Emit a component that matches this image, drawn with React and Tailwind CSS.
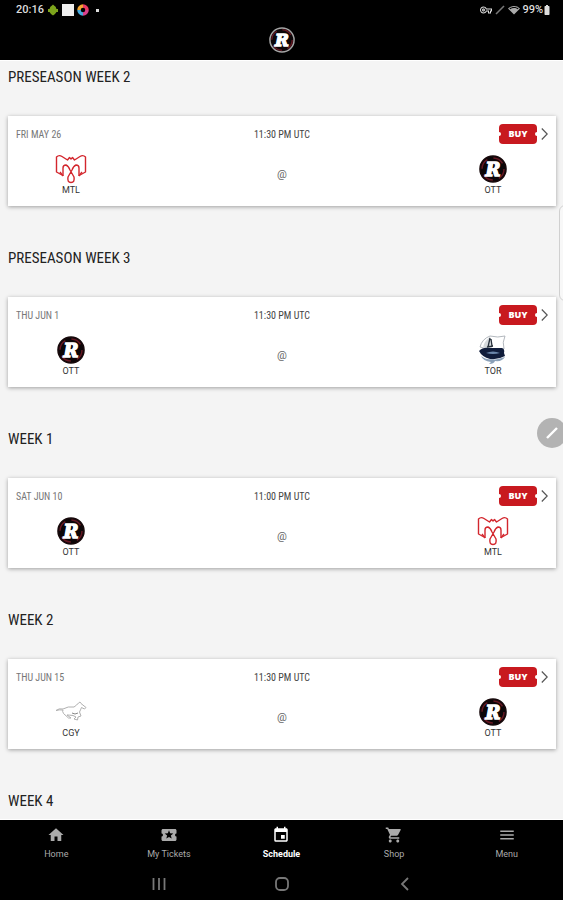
import React, { useState } from 'react';
import { MdHome, MdLocalPlay, MdEvent, MdShoppingCart, MdMenu, MdNetworkWifi, MdBatteryFull, MdOutlineVpnKey } from 'react-icons/md';

const weeks = [
  { title: 'PRESEASON WEEK 2', games: [{ date: 'FRI MAY 26', time: '11:30 PM UTC', away: 'MTL', home: 'OTT' }] },
  { title: 'PRESEASON WEEK 3', games: [{ date: 'THU JUN 1', time: '11:30 PM UTC', away: 'OTT', home: 'TOR' }] },
  { title: 'WEEK 1', games: [{ date: 'SAT JUN 10', time: '11:00 PM UTC', away: 'OTT', home: 'MTL' }] },
  { title: 'WEEK 2', games: [{ date: 'THU JUN 15', time: '11:30 PM UTC', away: 'CGY', home: 'OTT' }] },
  { title: 'WEEK 4', games: [] }
];

const tabs = [
  { label: 'Home', icon: MdHome },
  { label: 'My Tickets', icon: MdLocalPlay },
  { label: 'Schedule', icon: MdEvent },
  { label: 'Shop', icon: MdShoppingCart },
  { label: 'Menu', icon: MdMenu }
];

function OttLogo({ className, ring = '#17090b' }) {
  return <svg viewBox="0 0 28 28" className={className} aria-hidden="true">
    <circle cx="14" cy="14" r="13" fill="#0c0608" stroke={ring} strokeWidth="1.6" />
    <circle cx="14" cy="14" r="11" fill="none" stroke="#651722" strokeWidth="1.5" strokeDasharray="11 6.3" />
    <text x="14" y="20.5" textAnchor="middle" fontSize="18" fontWeight="700" fontStyle="italic" fill="#fff" stroke="#fff" strokeWidth="1.4" className="font-['DejaVu_Serif',serif]">R</text>
  </svg>;
}

function MtlLogo({ className }) {
  return <svg viewBox="0 0 32 30" className={className} fill="none" stroke="#d3262d" strokeWidth="1.4" strokeLinejoin="round" aria-hidden="true">
    <path d="M7 21 L1.5 18 V3 Q4 0.5 7 2.5 L12.5 6 L14.5 3.5 L16 5 L17.5 3.5 L19.5 6 L25 2.5 Q28 0.5 30.5 3 V18 L25 21" />
    <path d="M8 22 V14 Q8 11 11 11 Q13.5 12 15 16 L19 23 Q20 28.5 16 28.5 Q12 28.5 13 23 L17 16 Q18.5 12 21 11 Q24 11 24 14 V22" />
    <path d="M5 18 L8 22 M27 18 L24 22" />
  </svg>;
}

function TorLogo({ className }) {
  return <svg viewBox="0 0 30 30" className={className} aria-hidden="true">
    <path d="M2 12 Q4 4 12 1 Q20 3 27 1 Q24 7 26 14 L13 15 Z" fill="#fff" stroke="#a9afb5" strokeWidth="0.9" />
    <path d="M12 2 Q6 6 5 13 L14 13 Q15 7 12 2 Z" fill="#d6dadd" />
    <path d="M12 3 L10 12 M13 4 L14 11 M9 12 L15 11" stroke="#27303b" strokeWidth="1.3" fill="none" />
    <path d="M1 16 Q5 12 11 13 L24 13 Q27 14 26 18 L27 21 Q20 25 12 24 Q4 22 1 16 Z" fill="#101d3b" />
    <path d="M8 18 Q15 15 22 18 Q15 20 8 18 Z" fill="#6b87ab" />
    <path d="M3 21 Q9 26 20 24 L27 22 Q24 27 17 26 Q16 29 11 29 L13 27 Q5 26 3 21 Z" fill="#8aa0b8" />
  </svg>;
}

function CgyLogo({ className }) {
  return <svg viewBox="0 0 32 30" className={className} fill="none" stroke="#b0b0b0" strokeWidth="1" strokeLinejoin="round" aria-hidden="true">
    <path d="M1 13.5 Q4 11 8 12 Q13 9 19 10 Q22 8 23.5 6 L25 5 L26 6.5 L31 10.5 L29.5 12 L26.5 10.5 Q25.5 13 24.5 15 L26 19 L23 20 L22.5 23 L19 22 L21 20 L18 18.5 Q14 18 12 18 L16 21 L13.5 21 L8.5 16.5 Q7 14 8 13 Q4 12.5 1 13.5 Z" />
    <path d="M17 16 L20 17 L23 16" stroke="#888" />
  </svg>;
}

const logos = { OTT: OttLogo, MTL: MtlLogo, TOR: TorLogo, CGY: CgyLogo };

function Team({ code }) {
  const Logo = logos[code];
  return <div className="flex w-[110px] flex-col items-center">
    <div className="flex h-[30px] items-center justify-center">
      <Logo className={code === 'OTT' ? 'h-7 w-7' : 'h-[30px] w-8'} />
    </div>
    <span className="text-[9px] leading-3 text-[#333]">{code}</span>
  </div>;
}

function GameCard({ game }) {
  return <article className="bg-white px-2 pt-2 pb-[10px] shadow-[0_1px_4px_rgba(0,0,0,0.35)]">
    <div className="grid h-5 grid-cols-3 items-center font-['Roboto_Condensed','Liberation_Sans_Narrow',sans-serif] text-[10px]">
      <span className="text-[#777]">{game.date}</span>
      <span className="text-center text-[#444]">{game.time}</span>
      <div className="flex items-center justify-end gap-1">
        <button className="relative flex h-5 w-[38px] items-center justify-center rounded-[4px] bg-[#c8191f] font-['Open_Sans',sans-serif] text-[9px] font-extrabold text-white before:absolute before:-left-0.5 before:h-1 before:w-1 before:rounded-full before:bg-white after:absolute after:-right-0.5 after:h-1 after:w-1 after:rounded-full after:bg-white">
          BUY
        </button>
        <button aria-label="Game details">
          <svg viewBox="0 0 7 14" className="h-[14px] w-[7px]" fill="none" stroke="#555" strokeWidth="1.2"><path d="M0.8 1.5 L6.2 7 L0.8 12.5" /></svg>
        </button>
      </div>
    </div>
    <div className="mt-[10px] flex items-center justify-between">
      <Team code={game.away} />
      <span className="flex h-3 w-3 items-center justify-center text-[11px] leading-3 text-[#666]">@</span>
      <Team code={game.home} />
    </div>
  </article>;
}

export default function App() {
  const [active, setActive] = useState('Schedule');
  return <div className="relative flex h-screen flex-col overflow-hidden bg-black font-[Roboto,sans-serif]">
    {/* status bar */}
    <div className="flex h-5 shrink-0 items-center justify-between pr-3 pl-4 text-[11px] font-medium text-[#ddd]">
      <div className="flex items-center gap-[3px]">
        <span>20:16</span>
        <svg viewBox="0 0 12 12" className="h-3 w-3" aria-hidden="true">
          <path d="M1 5 H2.5 Q3 2 5 1.5 L6 0.5 L7 1.5 Q9 2 9.5 5 H11 V8 H9.5 L8 10 L6 11.500 L4 10 L2.5 8 H1 Z" fill="#7da41c" />
        </svg>
        <span className="h-3 w-3 bg-[#eee]" />
        <svg viewBox="0 0 12 12" className="h-3 w-3" fill="none" strokeWidth="3.5" aria-hidden="true">
          <path d="M6 2 A4 4 0 0 1 10 6" stroke="#e93a62" />
          <path d="M10 6 A4 4 0 0 1 6 10" stroke="#d9408c" />
          <path d="M6 10 A4 4 0 0 1 2 6" stroke="#45a9dc" />
          <path d="M2 6 A4 4 0 0 1 6 2" stroke="#f3a632" />
        </svg>
        <span className="ml-1 h-[3px] w-[3px] bg-[#ddd]" />
      </div>
      <div className="flex items-center">
        <MdOutlineVpnKey className="h-3 w-3" />
        <svg viewBox="0 0 12 12" className="ml-0.5 h-3 w-3" stroke="#777" strokeWidth="1.6" aria-hidden="true"><path d="M2 10 L10 2" /></svg>
        <MdNetworkWifi className="ml-0.5 h-3 w-3 text-[#aaa]" />
        <span className="ml-0.5">99%</span>
        <MdBatteryFull className="-mx-0.5 h-3 w-3" />
      </div>
    </div>
    <header className="flex h-10 shrink-0 items-center justify-center">
      <OttLogo className="h-[26px] w-[26px]" ring="#a5a5a5" />
    </header>

    <main className="min-h-0 flex-1 overflow-y-auto border-y border-white bg-[#f4f4f4] pt-1 pr-[7px] pl-2 [scrollbar-width:none]">
      {weeks.map(week => <section key={week.title} className="pb-10">
        <h2 className="mb-[27px] font-['Roboto_Condensed','Liberation_Sans_Narrow',sans-serif] text-[15px] leading-6 text-[#222]">{week.title}</h2>
        {week.games.map(game => <GameCard key={game.date} game={game} />)}
      </section>)}
    </main>

    <nav className="grid h-12 shrink-0 grid-cols-5">
      {tabs.map(({ label, icon: Icon }) => <button key={label} onClick={() => setActive(label)} className={active === label ? 'flex flex-col items-center pt-1.5 text-[9px] font-bold text-white' : 'flex flex-col items-center pt-1.5 text-[9px] text-[#aaa]'}>
        <Icon className="h-[18px] w-[18px]" />
        <span className="mt-1 leading-3">{label}</span>
      </button>)}
    </nav>

    {/* system keys */}
    <div className="flex h-8 shrink-0 items-center justify-center gap-[107px] pb-px">
      <button aria-label="Recent apps">
        <svg viewBox="0 0 16 16" className="h-4 w-4" stroke="#777" strokeWidth="1.8"><path d="M2.5 2 V14 M8 2 V14 M13.5 2 V14" /></svg>
      </button>
      <button aria-label="Home screen">
        <svg viewBox="0 0 16 16" className="h-4 w-4" fill="none" stroke="#777" strokeWidth="1.8"><rect x="2" y="2" width="12" height="12" rx="4" /></svg>
      </button>
      <button aria-label="Back">
        <svg viewBox="0 0 16 16" className="h-4 w-4" fill="none" stroke="#777" strokeWidth="1.8"><path d="M11 2 L5 8 L11 14" /></svg>
      </button>
    </div>

    {/* edge panel handle and floating pen */}
    <div className="absolute top-[205px] -right-2 h-24 w-3 rounded-md border border-[#d0d0d0] bg-[#f8f8f8]" />
    <button aria-label="Pen menu" className="absolute top-[418px] -right-1 flex h-[30px] w-[30px] items-center justify-center rounded-full bg-[#b3b3b3]">
      <svg viewBox="0 0 16 16" className="h-4 w-4" stroke="#fff" strokeWidth="2.4"><path d="M3 13 L13 3" /></svg>
    </button>
  </div>;
}
